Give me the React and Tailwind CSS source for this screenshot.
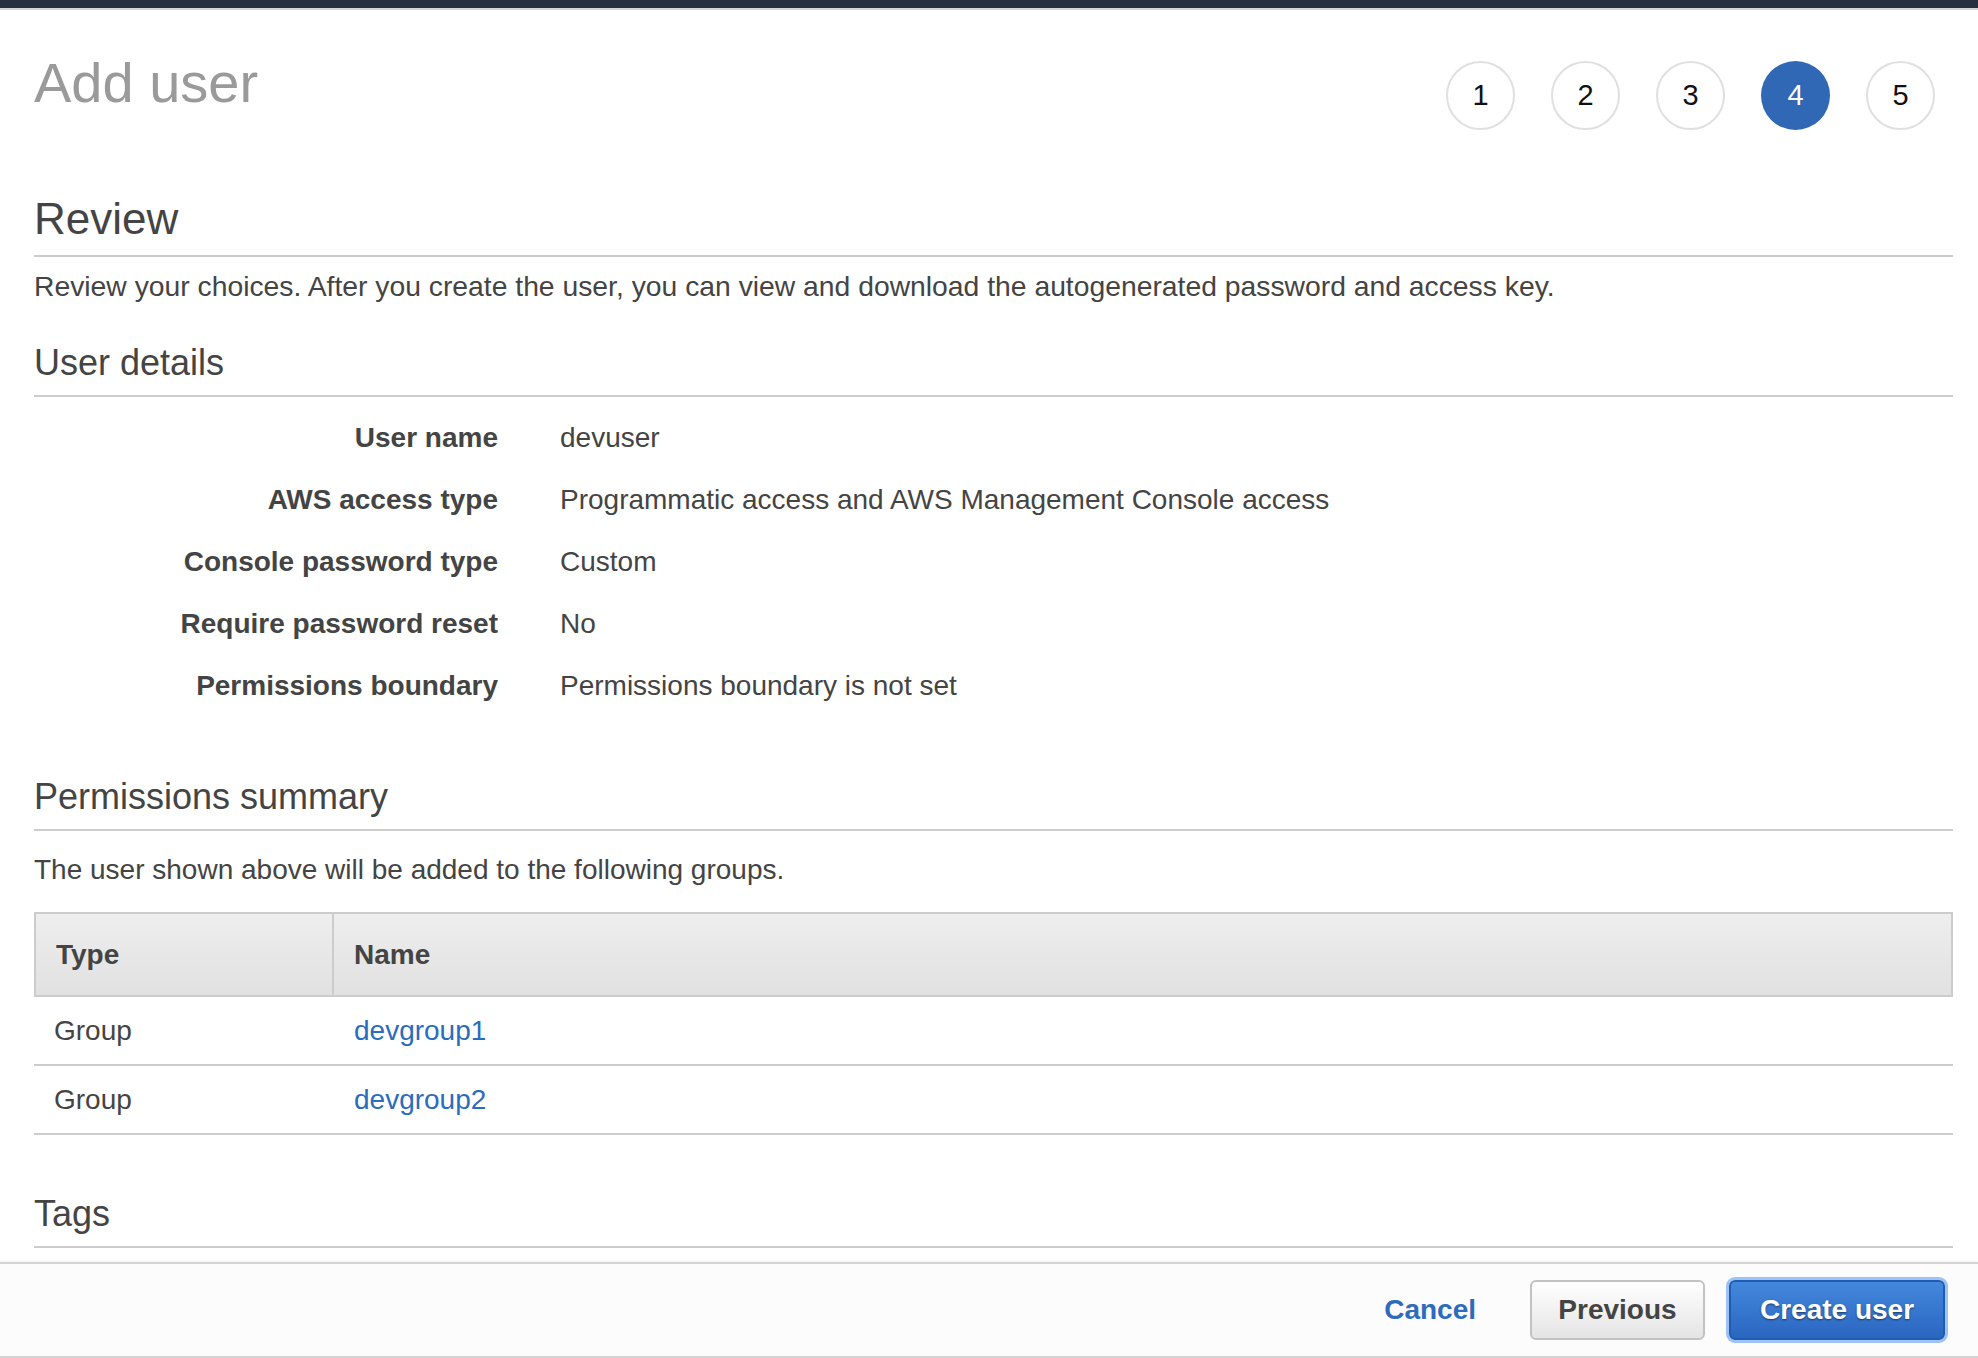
export default function App() {
  const rows = [
    ["User name", "devuser"],
    ["AWS access type", "Programmatic access and AWS Management Console access"],
    ["Console password type", "Custom"],
    ["Require password reset", "No"],
    ["Permissions boundary", "Permissions boundary is not set"],
  ];
  const steps = [1, 2, 3, 4, 5];
  return (
    <div className="h-[1358px] w-full overflow-hidden bg-white flex flex-col font-['Liberation_Sans',Arial,sans-serif] text-[#444]">
      <div className="h-[8px] bg-[#262f3f]" />
      <div className="h-[2px] bg-[#d3d3d3]" />
      <div className="flex-1 pl-[34px] pr-[25px]">
        <div className="flex justify-between items-start mt-[45px]">
          <h1 className="text-[56px] leading-none text-[#9a9a9a]">Add user</h1>
          <div className="flex gap-[36px] mt-[6px] mr-[18px]">
            {steps.map((s) =>
              s === 4 ? (
                <div key={s} className="w-[69px] h-[69px] rounded-full bg-[#3068b5] flex items-center justify-center text-white text-[29px]">
                  {s}
                </div>
              ) : (
                <div key={s} className="w-[69px] h-[69px] rounded-full border-2 border-[#e0e0e0] flex items-center justify-center text-[#111] text-[29px]">
                  {s}
                </div>
              )
            )}
          </div>
        </div>

        <h2 className="mt-[67px] text-[44px] leading-none pb-[14px] border-b-2 border-[#cccccc]">Review</h2>
        <p className="mt-[15px] text-[28.3px] leading-none">
          Review your choices. After you create the user, you can view and download the autogenerated password and access key.
        </p>

        <h3 className="mt-[45px] text-[36px] leading-none pb-[14px] border-b-2 border-[#cccccc]">User details</h3>
        <div className="mt-[10px]">
          {rows.map(([k, v]) => (
            <div key={k} className="flex h-[62px] items-center">
              <div className="w-[464px] text-right font-bold text-[28px] leading-none">{k}</div>
              <div className="ml-[62px] text-[28px] leading-none">{v}</div>
            </div>
          ))}
        </div>

        <h3 className="mt-[62px] text-[36px] leading-none pb-[14px] border-b-2 border-[#cccccc]">Permissions summary</h3>
        <p className="mt-[25px] text-[28px] leading-none">The user shown above will be added to the following groups.</p>

        <div className="mt-[28px]">
          <div className="flex h-[85px] border-2 border-[#cccccc] bg-gradient-to-b from-[#eeeeee] to-[#e1e1e1] font-bold text-[28px]">
            <div className="w-[298px] border-r-2 border-[#cccccc] flex items-center pl-[20px]">Type</div>
            <div className="flex items-center pl-[20px]">Name</div>
          </div>
          {["devgroup1", "devgroup2"].map((g) => (
            <div key={g} className="flex h-[69px] border-b-2 border-[#cccccc] items-center text-[28px]">
              <div className="w-[320px] pl-[20px]">Group</div>
              <div className="text-[#2a6cbd]">{g}</div>
            </div>
          ))}
        </div>

        <h3 className="mt-[61px] text-[36px] leading-none pb-[14px] border-b-2 border-[#cccccc]">Tags</h3>
      </div>

      <div className="h-[96px] border-t-2 border-b-2 border-[#d4d4d4] bg-[#fcfcfc] shadow-[0_-1px_2px_rgba(0,0,0,0.06)] flex items-center justify-end pr-[33px]">
        <button className="text-[28px] font-bold text-[#2d6cbd] mr-[54px]">Cancel</button>
        <button className="h-[60px] w-[175px] rounded-[6px] border-2 border-[#c2c2c2] bg-gradient-to-b from-[#ffffff] to-[#e4e4e4] text-[28px] font-bold text-[#444] mr-[24px]">
          Previous
        </button>
        <button className="h-[60px] w-[216px] rounded-[6px] border-2 border-[#1f5db3] bg-gradient-to-b from-[#4488dd] to-[#2a66c0] text-[28px] font-bold text-white shadow-[0_0_0_3px_#9fc2f5] [text-shadow:0_1px_2px_rgba(0,0,0,0.5)]">
          Create user
        </button>
      </div>
    </div>
  );
}
